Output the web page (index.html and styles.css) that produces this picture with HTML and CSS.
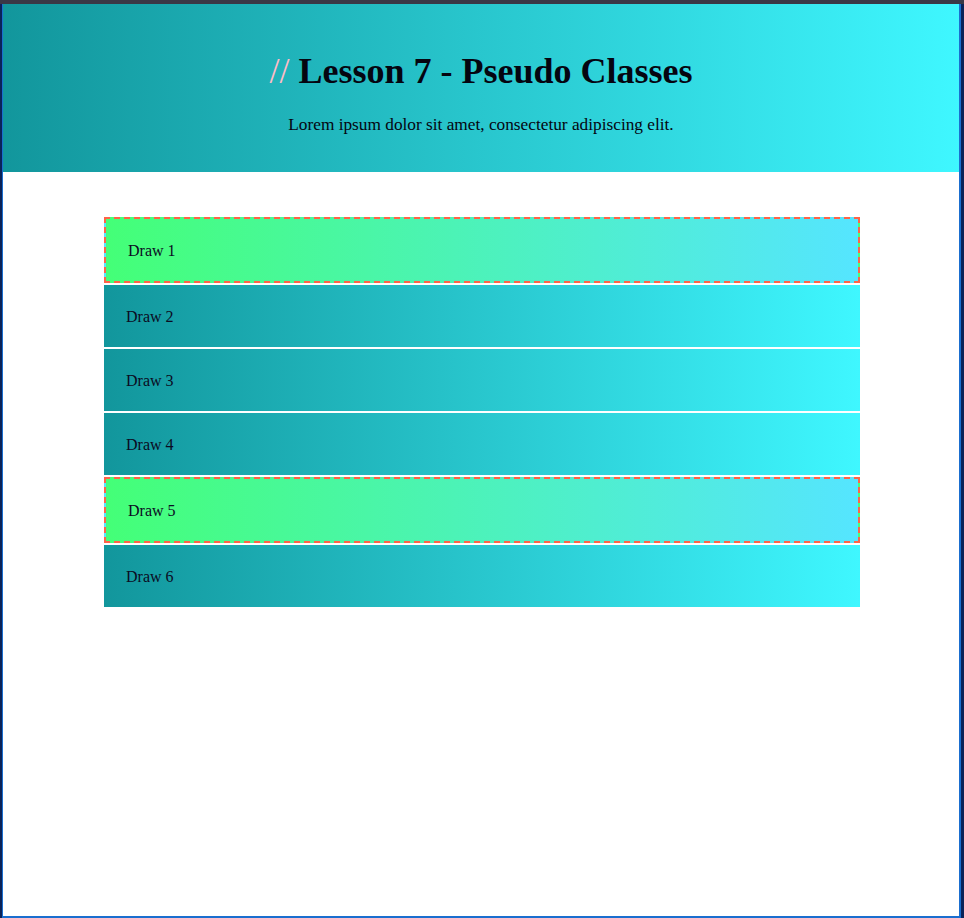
FILE: index.html
```html
<!DOCTYPE html>
<html lang="en">
<head>
<meta charset="utf-8">
<title>Lesson 7 - Pseudo Classes</title>
<link rel="stylesheet" href="styles.css">
</head>
<body>
<div class="screen">
  <div class="frame">
    <header class="header">
      <h1 class="title"><span class="slashes">//</span> Lesson 7 - Pseudo Classes</h1>
      <p class="subtitle">Lorem ipsum dolor sit amet, consectetur adipiscing elit.</p>
    </header>
    <main class="list">
      <div class="draw active">Draw 1</div>
      <div class="draw">Draw 2</div>
      <div class="draw">Draw 3</div>
      <div class="draw">Draw 4</div>
      <div class="draw active">Draw 5</div>
      <div class="draw">Draw 6</div>
    </main>
  </div>
</div>
</body>
</html>
```

FILE: styles.css
```css
html, body {
  margin: 0;
  padding: 0;
}

body {
  background: #071a45;
  font-family: "Liberation Serif", "Times New Roman", serif;
  color: #0b0b22;
}

.screen {
  box-sizing: border-box;
  width: 964px;
  height: 918px;
  background: #0a2258;
  border-top: 4px solid #3a3846;
  padding-left: 2px;
  padding-right: 3px;
}

.frame {
  box-sizing: border-box;
  height: 914px;
  background: #ffffff;
  border-style: solid;
  border-color: #1a6ecf;
  border-width: 0 2px 2px 1px;
  overflow: hidden;
}

.header {
  box-sizing: border-box;
  height: 168px;
  padding-top: 47px;
  background: linear-gradient(to right, #12969c, #3ff7ff);
  text-align: center;
}

.title {
  margin: 0;
  font-size: 36px;
  line-height: 40px;
  font-weight: bold;
  color: #050510;
}

.slashes {
  color: #ffbcc8;
  font-weight: normal;
}

.subtitle {
  margin: 24px 0 0;
  font-size: 17.3px;
  line-height: 20px;
  color: #050510;
}

.list {
  width: 756px;
  margin: 45px 0 0 101px;
}

.draw {
  box-sizing: border-box;
  height: 62px;
  display: flex;
  align-items: center;
  padding-left: 22px;
  padding-top: 2px;
  margin-bottom: 2px;
  font-size: 16px;
  background: linear-gradient(to right, #12969c, #3ff7ff);
}

.draw.active {
  height: 66px;
  border: 2px dashed #ff6347;
  background: linear-gradient(to right, #44ff77, #55e5ff);
}
```
